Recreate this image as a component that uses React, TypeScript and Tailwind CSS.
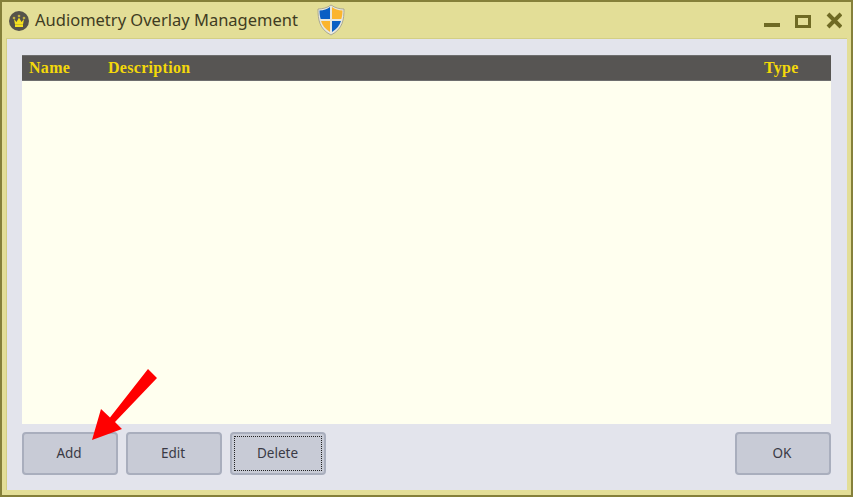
export default function App() {
  const btn = "w-[96px] h-[43px] rounded-[4px] border-2 border-[#a9aebd] bg-[#c8cbd6] text-[13.500px] text-[#3a3a45] flex items-center justify-center";
  return (
    <div className="relative w-[853px] h-[497px] flex flex-col bg-[#e3de97] border-2 border-[#85803a] overflow-hidden" style={{ fontFamily: '"Noto Sans", sans-serif' }}>
      <div className="h-[36px] shrink-0 flex items-center pl-[7px] pr-[9px]">
        <svg width="20" height="20" viewBox="0 0 20 20" className="shrink-0 mt-[1px]">
          <circle cx="10" cy="10" r="10" fill="#55524a" />
          <path d="M5 8l2.500 3L10 6.500 12.500 11 15 8l-1 5.500H6z" fill="#f5e020" />
          <rect x="6" y="13.500" width="8" height="2.500" fill="#f5e020" />
          <circle cx="5" cy="7" r="1.300" fill="#c0b040" />
          <circle cx="10" cy="5" r="1.300" fill="#c0b040" />
          <circle cx="15" cy="7" r="1.300" fill="#c0b040" />
        </svg>
        <span className="ml-[6px] text-[16.500px] text-[#3f3c22] whitespace-nowrap">Audiometry Overlay Management</span>
        <svg width="30" height="32" viewBox="0 0 30 32" className="ml-[18px] shrink-0">
          <path d="M15 1C11 4 6 5 2 5c0 10 1 20 13 26C27 25 28 15 28 5c-4 0-9-1-13-4z" fill="#e8e8e0" stroke="#9a9a8a" strokeWidth="0.800" />
          <path d="M14 3C11 5 8 6.500 3.500 6.500 3.500 10 4 13 4.700 15H14z" fill="#0a5fc4" />
          <path d="M16 3c3 2 6 3.500 10.500 3.500 0 3.500-.5 6.500-1.200 8.500H16z" fill="#fbb52e" />
          <path d="M5 17h9v11C9 25 6.300 21 5 17z" fill="#fbb52e" />
          <path d="M25 17h-9v11c5-3 7.700-7 9-11z" fill="#0a5fc4" />
        </svg>
        <div className="ml-auto flex items-center">
          <svg width="78" height="20" viewBox="0 0 78 20">
            <rect x="0" y="13" width="16" height="4" fill="#6f6a24" />
            <rect x="32.500" y="6.500" width="13" height="10" fill="none" stroke="#6f6a24" strokeWidth="3" />
            <path d="M64 4l13 13M77 4L64 17" stroke="#6f6a24" strokeWidth="4" fill="none" />
          </svg>
        </div>
      </div>
      <div className="ml-[4px] mr-[4px] mb-[5px] flex-1 bg-[#e3e4ec] pl-[15px] pr-[16px] pt-[16px] pb-[15px] flex flex-col border-t border-l border-[#d3cf85]">
        <div className="h-[26px] shrink-0 bg-[#575553] flex items-center text-[16px] tracking-[0.3px] font-bold text-[#f4d90a] border-t border-b border-[#6e6e6e]" style={{ fontFamily: '"Liberation Serif", serif' }}>
          <span className="w-[86px] pl-[7px]">Name</span>
          <span className="flex-1">Description</span>
          <span className="w-[67px]">Type</span>
        </div>
        <div className="flex-1 bg-[#ffffef]" />
        <div className="mt-[8px] flex gap-[8px]">
          <div className={btn + " pr-[2px]"}>Add</div>
          <div className={btn + " pr-[2px]"}>Edit</div>
          <div className={btn + " p-[2px]"}>
            <div className="w-full h-full border border-dotted border-[#222] flex items-center justify-center pr-[1px]">Delete</div>
          </div>
          <div className={btn + " ml-auto pr-[2px]"}>OK</div>
        </div>
      </div>
      <svg width="90" height="90" viewBox="0 0 90 90" className="absolute left-[86px] top-[364px]">
        <path d="M60 3 69 12 27 56 34 63 4 74 13 43 22 51.500Z" fill="#ff0000" />
      </svg>
    </div>
  );
}
